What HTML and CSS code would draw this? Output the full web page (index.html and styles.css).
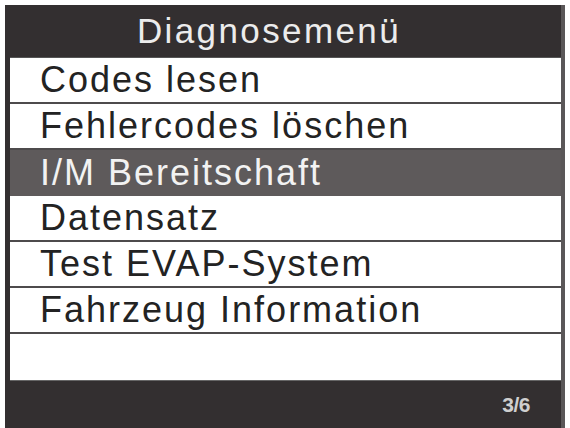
FILE: index.html
```html
<!DOCTYPE html>
<html lang="de">
<head>
<meta charset="utf-8">
<title>Diagnosemenü</title>
<link rel="stylesheet" href="styles.css">
</head>
<body>
<div class="screen">
  <div class="title">Diagnosemenü</div>
  <ul class="menu">
    <li class="item">Codes lesen</li>
    <li class="item">Fehlercodes löschen</li>
    <li class="item selected">I/M Bereitschaft</li>
    <li class="item">Datensatz</li>
    <li class="item">Test EVAP-System</li>
    <li class="item">Fahrzeug Information</li>
    <li class="item empty"></li>
  </ul>
  <div class="footer"><span class="page">3/6</span></div>
</div>
</body>
</html>
```

FILE: styles.css
```css
html, body {
  margin: 0;
  padding: 0;
  background: #ffffff;
}
body {
  width: 570px;
  height: 428px;
  overflow: hidden;
  font-family: "Liberation Sans", Arial, sans-serif;
}
.screen {
  margin: 5px 5px 0 5px;
  width: 560px;
  height: 423px;
  background: #332f30;
  border-right: 4px solid #5a5758;
  box-sizing: border-box;
  display: flex;
  flex-direction: column;
}
.title {
  height: 52px;
  display: flex;
  align-items: center;
  justify-content: center;
  padding-right: 28px;
  color: #ececec;
  font-size: 35px;
  letter-spacing: 2.4px;
}
.menu {
  list-style: none;
  margin: 0;
  padding: 0;
  background: #ffffff;
  margin-left: 5px;
  border-top: 1px solid #555;
  display: flex;
  flex-direction: column;
}
.item {
  height: 44px;
  border-bottom: 2px solid #4d4b4c;
  display: flex;
  align-items: center;
  padding-left: 30px;
  color: #232323;
  font-size: 36px;
  letter-spacing: 2px;
  white-space: nowrap;
}
.item.selected {
  background: #5e5a5b;
  color: #f2f2f2;
  height: 46px;
  border-bottom: 0;
}
.item.empty {
  height: 46px;
  border-bottom: 1px solid #666;
}
.footer {
  flex: 1;
  display: flex;
  align-items: center;
  justify-content: flex-end;
  padding-right: 31px;
}
.page {
  color: #cfcfcf;
  font-size: 21px;
  font-weight: bold;
  letter-spacing: -0.5px;
}
```
